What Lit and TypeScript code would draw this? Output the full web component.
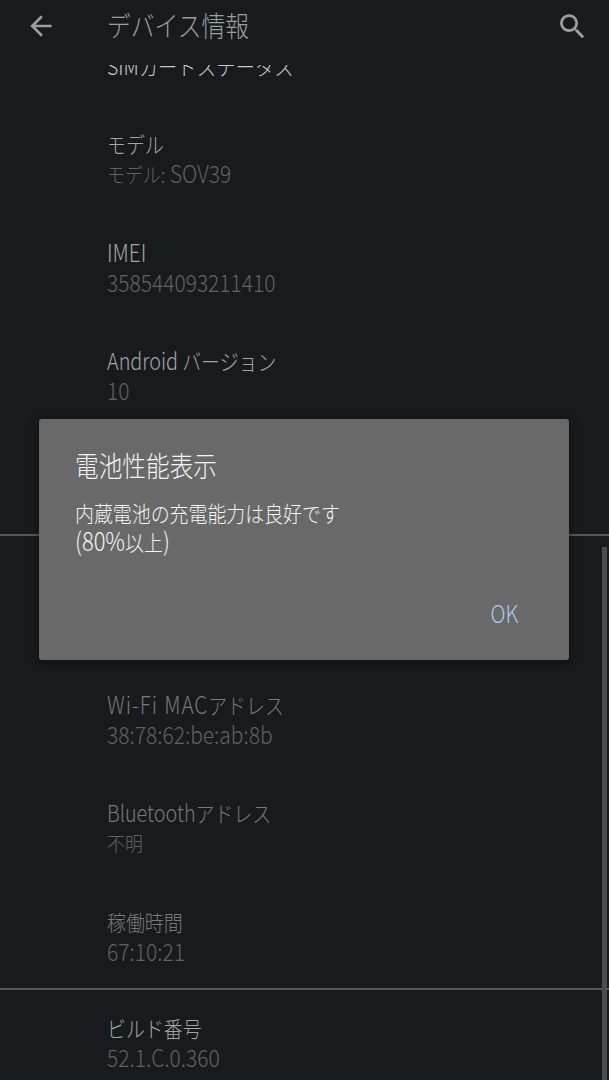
import { LitElement, html, css, TemplateResult } from "lit";
import { customElement } from "lit/decorators.js";

@customElement("app-root")
export class AppRoot extends LitElement {
  static styles = css`
    :host { display: block; width: 609px; height: 1080px; background: #171b1e; overflow: hidden; position: relative; font-family: "Noto Sans CJK JP", "Noto Sans", sans-serif; font-weight: 300; }
    .page { display: flex; flex-direction: column; height: 1080px; }
    .bar { height: 65px; flex: none; display: flex; align-items: flex-start; position: relative; z-index: 1; background: #171b1e; }
    .back { width: 107px; flex: none; padding: 10px 0 0 25px; box-sizing: border-box; height: 65px; }
    .bar-title { flex: 1; font-size: 28px; line-height: 50px; color: #9c9ea0; white-space: nowrap; }
    .bar-title .n { transform: scaleX(0.85); }
    .search { padding: 10px 20px 0 0; }
    svg { display: block; }
    .list { flex: 1; overflow: hidden; }
    .inner { margin-top: -37px; }
    .row { padding: 22px 0 26px 107px; }
    .t, .s { line-height: 30px; white-space: nowrap; }
    .n { display: inline-block; transform: scaleX(0.86); transform-origin: left center; }
    .t { font-size: 22px; color: #a3a5a7; }
    .s { font-size: 24px; color: #5f6367; }
    .s .n { transform: scaleX(0.875); }
    .s .ja { font-size: 20.5px; }
    .lat { font-size: 24px; }
    .lat-sm { font-size: 23px; }
    .wide { word-spacing: 1px; letter-spacing: 1.1px; }
    .t.dim { color: #77797c; }
    .t.bright { color: #c8cacb; }
    .t.bright .n { transform: scaleX(0.88); }
    .row.hidden-a { height: 103px; box-sizing: border-box; }
    .row.hidden-b { height: 131px; box-sizing: border-box; }
    .row.last { height: 104px; box-sizing: border-box; }
    .rule { height: 2px; background: #55585b; }
    .scroll { position: absolute; right: 2px; top: 547px; bottom: 0; width: 5px; background: #4b4e51; z-index: 2; }
    .dialog { position: absolute; z-index: 3; left: 39px; top: 419px; width: 530px; height: 241px; box-sizing: border-box; background: #696969; border-radius: 3px; box-shadow: 0 2px 10px rgba(0,0,0,.45); padding: 27px 36px 0 36px; display: flex; flex-direction: column; color: #f4f4f4; }
    .d-title { font-size: 28px; line-height: 38px; white-space: nowrap; }
    .d-title .n { transform: scaleX(0.845); }
    .d-body { font-size: 22px; line-height: 28px; margin-top: 14px; white-space: nowrap; }
    .d-body .lat { font-size: 25.5px; }
    .d-actions { margin-top: auto; display: flex; justify-content: flex-end; padding: 0 15px 31px 0; }
    .ok { font-size: 24px; line-height: 32px; color: #aec8ee; display: inline-block; transform: scaleX(0.86); transform-origin: right center; }
  `;

  private row(title: TemplateResult | string, sub: TemplateResult | string, cls = "") {
    return html`<div class="row">
      <div class="t ${cls}"><span class="n">${title}</span></div>
      <div class="s"><span class="n">${sub}</span></div>
    </div>`;
  }

  render() {
    return html`
      <div class="page">
        <div class="bar">
          <div class="back">
            <svg width="32" height="32" viewBox="0 0 24 24" fill="#9c9ea0"><path d="M20 11H7.83l5.59-5.59L12 4l-8 8 8 8 1.41-1.41L7.83 13H20z"/></svg>
          </div>
          <div class="bar-title"><span class="n">デバイス情報</span></div>
          <div class="search">
            <svg width="33" height="33" viewBox="0 0 24 24" fill="#9c9ea0"><path d="M15.5 14h-.79l-.28-.27C15.41 12.59 16 11.11 16 9.5 16 5.91 13.09 3 9.5 3S3 5.91 3 9.5 5.91 16 9.5 16c1.61 0 3.09-.59 4.23-1.57l.27.28v.79l5 4.99L20.49 19l-4.99-5zm-6 0C7.01 14 5 11.99 5 9.5S7.01 5 9.5 5 14 7.01 14 9.5 11.99 14 9.5 14z"/></svg>
          </div>
        </div>
        <div class="list">
          <div class="inner">
            <div class="row"><div class="t bright"><span class="n">SIMカードステータス</span></div></div>
            ${this.row("モデル", html`<span class="ja">モデル:</span> SOV39`)}
            ${this.row(html`<span class="lat">IMEI</span>`, "358544093211410")}
            ${this.row(html`<span class="lat-sm">Android</span> バージョン`, "10")}
            <div class="row hidden-a"></div>
            <div class="rule"></div>
            <div class="row hidden-b"></div>
            ${this.row(html`<span class="lat wide">Wi-Fi MAC</span>アドレス`, "38:78:62:be:ab:8b", "dim")}
            ${this.row(html`<span class="lat-sm">Bluetooth</span>アドレス`, html`<span class="ja">不明</span>`, "dim")}
            <div class="row last">
              <div class="t dim"><span class="n">稼働時間</span></div>
              <div class="s"><span class="n">67:10:21</span></div>
            </div>
            <div class="rule"></div>
            ${this.row("ビルド番号", "52.1.C.0.360")}
          </div>
        </div>
      </div>
      <div class="scroll"></div>
      <div class="dialog">
        <div class="d-title"><span class="n">電池性能表示</span></div>
        <div class="d-body"><span class="n">内蔵電池の充電能力は良好です<br /><span class="lat">(80%</span>以上<span class="lat">)</span></span></div>
        <div class="d-actions"><span class="ok">OK</span></div>
      </div>
    `;
  }
}
